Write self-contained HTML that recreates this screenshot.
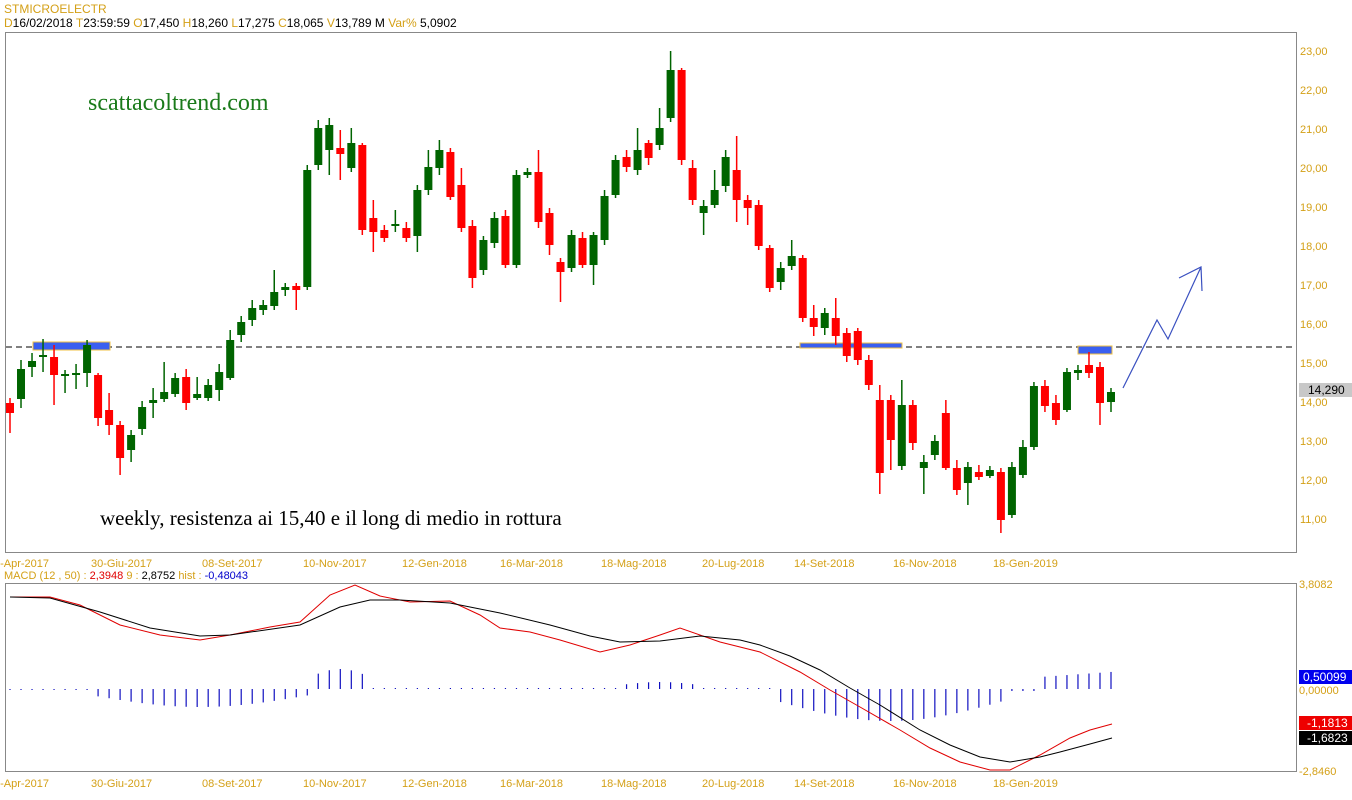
<!DOCTYPE html>
<html><head><meta charset="utf-8"><style>
html,body{margin:0;padding:0;background:#fff;width:1352px;height:800px;overflow:hidden}
svg text{font-family:"Liberation Sans",sans-serif}
</style></head><body>
<svg id="s" width="1352" height="800" xmlns="http://www.w3.org/2000/svg">
<text x="4" y="13" font-size="12" fill="#d4a017">STMICROELECTR</text>
<text x="4" y="27" font-size="12" fill="#000"><tspan fill="#d4a017">D</tspan>16/02/2018  <tspan fill="#d4a017">T</tspan>23:59:59  <tspan fill="#d4a017">O</tspan>17,450  <tspan fill="#d4a017">H</tspan>18,260  <tspan fill="#d4a017">L</tspan>17,275  <tspan fill="#d4a017">C</tspan>18,065  <tspan fill="#d4a017">V</tspan>13,789 M  <tspan fill="#d4a017">Var%</tspan> 5,0902</text>
<rect x="5.5" y="32.5" width="1291" height="520" fill="none" stroke="#888"/>
<rect x="5.5" y="583.5" width="1291" height="188" fill="none" stroke="#888"/>
<g id="ax" font-size="11" fill="#d4a017"></g>
<line x1="6" y1="347" x2="1296" y2="347" stroke="#000" stroke-dasharray="6,4"/>
<rect x="33" y="342" width="77" height="8" fill="#3a5ff0" stroke="#f0c040"/>
<rect x="800" y="343" width="102" height="5" fill="#3a5ff0" stroke="#f0c040"/>
<rect x="1078" y="346" width="34" height="8" fill="#3a5ff0" stroke="#f0c040"/>
<g id="c"></g>
<polyline points="1123,388 1157,320 1168,339 1201,267" fill="none" stroke="#3a50c0" stroke-width="1.2"/>
<polyline points="1179,278 1201,267 1202,291" fill="none" stroke="#3a50c0" stroke-width="1.2"/>
<text x="88" y="110" font-size="24" fill="#1a7a1a" style="font-family:'Liberation Serif',serif">scattacoltrend.com</text>
<text x="100" y="525" font-size="21" fill="#000" style="font-family:'Liberation Serif',serif">weekly, resistenza ai 15,40 e il long di medio in rottura</text>
<rect x="1299" y="383" width="53" height="14" fill="#c8c8c8"/>
<text x="1308" y="394" font-size="12" fill="#000">14,290</text>
<text x="4" y="579" font-size="11" fill="#000"><tspan fill="#d4a017">MACD</tspan>   <tspan fill="#d4a017">(12 , 50) :</tspan> <tspan fill="#e00000">2,3948</tspan>   <tspan fill="#d4a017">9 :</tspan>  2,8752   <tspan fill="#d4a017">hist :</tspan>  <tspan fill="#0000cc">-0,48043</tspan></text>
<g id="h"></g>
<polyline fill="none" stroke="#e00000" points="10,597 50,597 80,605 120,625 160,635 200,640 230,635 270,627 300,622 330,595 355,585 380,596 410,602 450,601 480,615 500,628 530,632 560,640 600,652 630,645 660,635 680,628 720,642 760,652 800,672 830,690 860,707 900,730 930,748 960,762 990,770 1010,770 1040,755 1070,738 1090,730 1112,724"/>
<polyline fill="none" stroke="#000" points="10,597 50,598 100,612 150,628 200,636 230,635 300,625 340,607 370,600 400,600 450,603 500,613 550,625 590,636 620,642 660,641 700,636 740,640 760,645 790,656 820,670 850,688 880,705 920,730 950,745 980,757 1010,762 1040,757 1060,752 1090,744 1112,738"/>
<rect x="1299" y="670" width="53" height="14" fill="#0000ee"/>
<text x="1303" y="681" font-size="12" fill="#fff">0,50099</text>
<text x="1299" y="694" font-size="11" fill="#d4a017">0,00000</text>
<text x="1299" y="588" font-size="11" fill="#d4a017">3,8082</text>
<rect x="1299" y="716" width="53" height="14" fill="#ee0000"/>
<text x="1307" y="727" font-size="12" fill="#fff">-1,1813</text>
<rect x="1299" y="731" width="53" height="14" fill="#000"/>
<text x="1307" y="742" font-size="12" fill="#fff">-1,6823</text>
<text x="1299" y="775" font-size="11" fill="#d4a017">-2,8460</text>
</svg>
<script>
var NS="http://www.w3.org/2000/svg";
function el(p,t,a,tx){var e=document.createElementNS(NS,t);for(var k in a)e.setAttribute(k,a[k]);if(tx)e.textContent=tx;document.getElementById(p).appendChild(e);}
for(var v=11;v<=23;v++){el("ax","text",{x:1300,y:55+(23-v)*39},v+",00");}
var d=[["8-Apr-2017",-6],["30-Giu-2017",91],["08-Set-2017",202],["10-Nov-2017",303],["12-Gen-2018",402],["16-Mar-2018",500],["18-Mag-2018",601],["20-Lug-2018",702],["14-Set-2018",794],["16-Nov-2018",893],["18-Gen-2019",993]];
d.forEach(function(a){el("ax","text",{x:a[1],y:567},a[0]);el("ax","text",{x:a[1],y:787},a[0]);});
var C=[["r",403,413,398,433],["g",369,399,360,408],["g",361,367,353,377],["g",355,357,339,372],["r",357,375,345,405],["g",374,376,370,393],["g",373,374,364,389],["g",345,373,340,387],["r",375,418,373,426],["r",410,425,393,435],["r",425,458,421,475],["g",435,450,430,462],["g",407,429,401,435],["g",400,403,388,418],["g",392,399,362,402],["g",378,394,373,397],["r",377,403,369,410],["g",394,398,377,400],["g",385,398,379,401],["g",372,390,364,401],["g",340,378,330,380],["g",322,335,316,342],["g",308,320,300,326],["g",305,310,300,315],["g",292,306,270,310],["g",287,290,283,296],["r",286,290,283,310],["g",170,287,165,290],["g",128,165,120,170],["g",125,150,118,175],["r",148,154,130,180],["g",143,168,128,172],["r",145,230,143,235],["r",218,232,200,252],["r",230,238,225,242],["g",224,226,210,232],["r",228,238,222,242],["g",190,236,185,252],["g",167,190,150,195],["g",150,168,140,175],["r",152,197,148,200],["r",185,228,168,232],["r",226,278,220,288],["g",240,270,236,275],["g",218,243,212,248],["r",216,265,210,268],["g",175,265,170,268],["g",172,175,168,178],["r",172,222,150,228],["r",213,245,208,255],["r",262,272,258,302],["g",235,268,230,272],["r",238,265,232,268],["g",235,265,232,285],["g",196,240,190,245],["g",160,195,155,198],["r",157,167,150,172],["g",150,170,128,175],["r",143,158,140,165],["g",128,145,108,150],["g",70,118,51,122],["r",70,160,68,165],["r",168,200,160,205],["g",206,213,200,235],["g",190,205,170,208],["g",157,186,150,192],["r",170,200,136,222],["r",200,208,195,225],["r",205,246,200,250],["r",248,288,245,292],["g",268,282,262,290],["g",256,266,240,270],["r",258,318,255,322],["r",318,327,305,336],["g",313,328,308,335],["r",318,336,298,345],["r",333,356,328,362],["r",331,360,328,365],["r",360,385,355,390],["r",400,473,385,494],["r",400,440,395,470],["g",405,466,380,470],["r",405,443,400,450],["g",462,468,455,494],["g",441,455,435,460],["r",413,468,400,470],["r",468,490,460,495],["g",467,483,462,505],["r",472,477,465,480],["g",470,476,466,478],["r",472,520,468,533],["g",467,515,462,518],["g",447,475,440,478],["g",386,447,382,450],["r",386,406,380,412],["r",403,420,395,425],["g",372,410,368,412],["g",370,373,365,380],["r",365,373,352,378],["r",367,403,362,425],["g",392,402,388,412]];
C.forEach(function(c,i){var x=10+i*11.01;var col=c[0]=="r"?"#ff0000":"#006400";
el("c","line",{x1:x,y1:c[3],x2:x,y2:c[4],stroke:col,"stroke-width":1.5});
el("c","rect",{x:x-4,y:c[1],width:8,height:Math.max(2,c[2]-c[1]),fill:col});});
for(var i=0;i<C.length;i++){var x=10+i*11.01;var h;
if(x<90)h=-1;else if(x<310)h=-(6+12*Math.sin((x-90)/220*Math.PI));else if(x<370)h=12+8*Math.sin((x-310)/60*Math.PI);else if(x<770)h=(x>620&&x<700)?4+3*Math.sin((x-620)/80*Math.PI):1;else if(x<1010)h=-(10+22*Math.sin((x-770)/240*Math.PI));else if(x<1040)h=-2;else h=12+(x-1040)/70*5;
if(Math.abs(h)<2)h=h<0?-1:1;
el("h","line",{x1:x,y1:689,x2:x,y2:689-h,stroke:"#1010c0","stroke-width":1.2});}
</script>
</body></html>
